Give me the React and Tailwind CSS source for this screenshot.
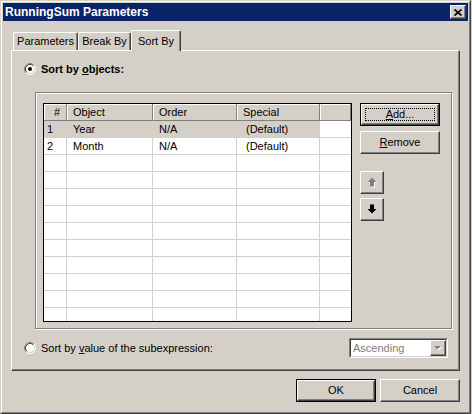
import React from "react";

const cols = [
    { key: "n", label: "#", w: "w-[23px]", head: "pl-[10px]", body: "pl-[3px]" },
    { key: "obj", label: "Object", w: "w-[86px]", head: "pl-[6px]", body: "pl-[6px]" },
    { key: "order", label: "Order", w: "w-[84px]", head: "pl-[6px]", body: "pl-[6px]" },
    { key: "special", label: "Special", w: "w-[83px]", head: "pl-[6px]", body: "pl-[9px]" },
    { key: "x", label: "", w: "w-[31px]", head: "", body: "" },
];

const rows = [
    { n: "1", obj: "Year", order: "N/A", special: "(Default)", sel: true },
    { n: "2", obj: "Month", order: "N/A", special: "(Default)" },
    ...Array.from({ length: 10 }, () => ({})),
];

function Radio({ checked }) {
    return (
        <svg width="12" height="12" viewBox="0 0 12 12" className="shrink-0">
            <circle cx="6" cy="6" r="5" fill="#fff" />
            <path d="M2.11 9.89 A5.5 5.5 0 0 1 9.89 2.11" fill="none" stroke="#808080" />
            <path d="M9.89 2.11 A5.5 5.5 0 0 1 2.11 9.89" fill="none" stroke="#fff" />
            <path d="M2.82 9.18 A4.5 4.5 0 0 1 9.18 2.82" fill="none" stroke="#404040" />
            <path d="M9.18 2.82 A4.5 4.5 0 0 1 2.82 9.18" fill="none" stroke="#d4d0c8" />
            {checked && <circle cx="6" cy="6" r="2" fill="#000" />}
        </svg>
    );
}

const raised =
    "border border-t-white border-l-white border-r-[#404040] border-b-[#404040] shadow-[inset_-1px_-1px_0_#808080] bg-[#d4d0c8]";

function Button({ children, isDefault = false, focused = false, className = "" }) {
    if (isDefault) {
        return (
            <div className={`border border-black ${className}`}>
                <div className={`relative w-full h-full flex items-center justify-center ${raised}`}>
                    {focused && (
                        <div className="absolute inset-[3px] border border-dotted border-black" />
                    )}
                    {children}
                </div>
            </div>
        );
    }
    return (
        <div className={`flex items-center justify-center ${raised} ${className}`}>{children}</div>
    );
}

function Arrow({ up, disabled }) {
    const d = up
        ? "M5 0.5 L9.5 5 L7 5 L7 9.5 L3 9.5 L3 5 L0.5 5 Z"
        : "M5 9.5 L9.5 5 L7 5 L7 0.5 L3 0.5 L3 5 L0.5 5 Z";
    return (
        <svg width="11" height="11" viewBox="0 0 11 11">
            {disabled && <path d={d} fill="#fff" transform="translate(1 1)" />}
            <path d={d} fill={disabled ? "#808080" : "#000"} />
        </svg>
    );
}

function Tab({ children, selected = false, className = "" }) {
    return (
        <div
            className={`flex items-center justify-center rounded-t-[2px] border-t border-l border-r border-t-white border-l-white border-r-[#404040] shadow-[inset_-1px_0_0_#808080] bg-[#d4d0c8] ${selected ? "h-[21px] -mb-px relative z-10" : "h-[18px]"
                } ${className}`}
        >
            {children}
        </div>
    );
}

export default function App() {
    return (
        <div className="w-[472px] h-[414px] bg-[#d4d0c8] font-['Liberation_Sans',Arial,sans-serif] text-[11px] text-black leading-none">
            <div className="w-[471px] h-[414px] border border-t-[#d4d0c8] border-l-[#d4d0c8] border-r-[#404040] border-b-[#404040]">
                <div className="h-full border border-t-white border-l-white border-r-[#808080] border-b-[#808080] p-px">
                    {/* Title bar */}
                    <div className="h-[18px] bg-[#0a246a] flex items-center justify-between pl-[2px] pr-[2px]">
                        <span className="text-white font-bold text-[12px]">RunningSum Parameters</span>
                        <Button className="w-[16px] h-[14px]">
                            <svg width="8" height="7" viewBox="0 0 8 7">
                                <path d="M0.5 0.5 L7.5 6.5 M7.5 0.5 L0.5 6.5" stroke="#000" strokeWidth="1.7" />
                            </svg>
                        </Button>
                    </div>

                    <div className="mt-[9px] pl-[8px]">
                        {/* Tabs */}
                        <div className="h-[20px] flex items-end">
                            <Tab className="ml-[2px] w-[65px]">Parameters</Tab>
                            <Tab className="w-[53px]">Break By</Tab>
                            <Tab selected className="w-[50px]">Sort By</Tab>
                        </div>

                        {/* Panel */}
                        <div className="w-[449px] h-[321px] border border-t-white border-l-white border-r-[#404040] border-b-[#404040] shadow-[inset_-1px_-1px_0_#808080]">
                            <div className="mt-[12px] pl-[12px] h-[12px] flex items-center gap-[5px]">
                                <Radio checked />
                                <span className="font-bold">
                                    Sort by <span className="underline">o</span>bjects:
                                </span>
                            </div>

                            {/* Group frame */}
                            <div className="mt-[17px] ml-[23px] w-[417px] h-[237px] border border-[#808080] shadow-[inset_1px_1px_0_#fff,1px_1px_0_#fff] flex pt-[10px] pl-[7px]">
                                <div className="w-[309px] h-[219px] border border-black bg-white overflow-hidden">
                                    <div className="flex h-[17px]">
                                        {cols.map((c) => (
                                            <div
                                                key={c.key}
                                                className={`${c.w} ${c.head} h-full flex items-center bg-[#d4d0c8] border-r border-b border-[#808080] shadow-[inset_1px_1px_0_#fff]`}
                                            >
                                                {c.label}
                                            </div>
                                        ))}
                                    </div>
                                    {rows.map((r, i) => (
                                        <div key={i} className="flex h-[17px]">
                                            {cols.map((c, ci) => (
                                                <div
                                                    key={c.key}
                                                    className={`${c.w} ${c.body} h-full flex items-center border-b border-[#d4d0c8] ${ci < 4 ? "border-r" : ""} ${r.sel && ci < 4 ? "bg-[#d4d0c8]" : "bg-white"
                                                        }`}
                                                >
                                                    {r[c.key] ?? ""}
                                                </div>
                                            ))}
                                        </div>
                                    ))}
                                </div>

                                <div className="ml-[8px] flex flex-col">
                                    <Button isDefault focused className="w-[80px] h-[23px]">
                                        <span>
                                            <span className="underline">A</span>dd...
                                        </span>
                                    </Button>
                                    <Button className="mt-[5px] w-[80px] h-[23px]">
                                        <span>
                                            <span className="underline">R</span>emove
                                        </span>
                                    </Button>
                                    <Button className="mt-[17px] w-[24px] h-[23px]">
                                        <Arrow up disabled />
                                    </Button>
                                    <Button className="mt-[4px] w-[24px] h-[23px]">
                                        <Arrow />
                                    </Button>
                                </div>
                            </div>

                            {/* Bottom row */}
                            <div className="mt-[9px] h-[20px] flex items-center justify-between pl-[12px] pr-[11px]">
                                <div className="flex items-center gap-[5px]">
                                    <Radio />
                                    <span>
                                        Sort by <span className="underline">v</span>alue of the subexpression:
                                    </span>
                                </div>
                                <div className="w-[99px] h-[20px] border border-t-[#808080] border-l-[#808080] border-r-white border-b-white">
                                    <div className="h-full flex items-center bg-white border border-t-[#404040] border-l-[#404040] border-r-[#d4d0c8] border-b-[#d4d0c8]">
                                        <span className="flex-1 pl-[2px] text-[#808080]">Ascending</span>
                                        <Button className="w-[16px] h-[16px]">
                                            <svg width="8" height="5" viewBox="0 0 8 5">
                                                <path d="M1 1 L8 1 L4.5 4.5 Z" fill="#fff" />
                                                <path d="M0 0 L7 0 L3.5 3.5 Z" fill="#808080" />
                                            </svg>
                                        </Button>
                                    </div>
                                </div>
                            </div>
                        </div>

                        {/* Dialog buttons */}
                        <div className="mt-[8px] w-[449px] flex justify-end gap-[4px]">
                            <Button isDefault className="w-[80px] h-[23px]">OK</Button>
                            <Button className="w-[80px] h-[23px]">Cancel</Button>
                        </div>
                    </div>
                </div>
            </div>
        </div>
    );
}
